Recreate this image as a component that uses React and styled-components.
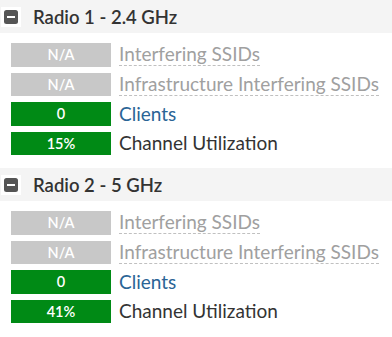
import React from 'react';
import styled, { createGlobalStyle } from 'styled-components';

const GlobalStyle = createGlobalStyle`
  body {
    margin: 0;
    background: #ffffff;
    font-family: Lato, "Liberation Sans", sans-serif;
  }
`;

const Page = styled('div')`
  display: flex;
  flex-direction: column;
  gap: 13px;
  width: 392px;
`;

const Section = styled('section')`
  display: flex;
  flex-direction: column;
`;

const Header = styled('div')`
  display: flex;
  align-items: center;
  gap: 12px;
  height: 33px;
  padding-left: 1px;
  background-color: #f4f4f4;
`;

const ToggleBox = styled('span')`
  display: flex;
  align-items: center;
  justify-content: center;
  width: 20px;
  height: 20px;
  background-color: #ffffff;
`;

const Title = styled('h3')`
  margin: 0;
  font-size: 18.5px;
  font-weight: 600;
  color: #333333;
`;

const Rows = styled('div')`
  display: flex;
  flex-direction: column;
  gap: 6px;
  padding: 10px 0 0 11px;
`;

const Row = styled('div')`
  display: flex;
  align-items: center;
  gap: 8px;
  height: 23.5px;
`;

const Badge = styled('span')`
  display: flex;
  align-items: center;
  justify-content: center;
  width: 100px;
  height: 100%;
  background-color: ${props => (props.active ? '#008a15' : '#c8c8c8')};
  color: #ffffff;
  font-size: 14.5px;
  font-weight: 600;
`;

const Label = styled('span')`
  font-size: 19px;
  line-height: 22px;
  color: ${props =>
    props.kind === 'muted' ? '#a0a0a0' : props.kind === 'link' ? '#2a6496' : '#333333'};
  ${props =>
    props.kind === 'muted' &&
    `
    border-bottom: 1px dashed #c0c0c0;
  `}
`;

const MinusIcon = () => (
  <svg width="14" height="14" viewBox="0 0 14 14">
    <rect x="0" y="0" width="14" height="14" rx="2.5" fill="#555555" />
    <rect x="3" y="6" width="8" height="2" fill="#ffffff" />
  </svg>
);

const radios = [
  { title: 'Radio 1 - 2.4 GHz', util: '15%' },
  { title: 'Radio 2 - 5 GHz', util: '41%' },
];

const App = () => (
  <>
    <GlobalStyle />
    <Page>
      {radios.map(radio => (
        <Section key={radio.title}>
          <Header>
            <ToggleBox>
              <MinusIcon />
            </ToggleBox>
            <Title>{radio.title}</Title>
          </Header>
          <Rows>
            <Row>
              <Badge>N/A</Badge>
              <Label kind="muted">Interfering SSIDs</Label>
            </Row>
            <Row>
              <Badge>N/A</Badge>
              <Label kind="muted">Infrastructure Interfering SSIDs</Label>
            </Row>
            <Row>
              <Badge active>0</Badge>
              <Label kind="link">Clients</Label>
            </Row>
            <Row>
              <Badge active>{radio.util}</Badge>
              <Label>Channel Utilization</Label>
            </Row>
          </Rows>
        </Section>
      ))}
    </Page>
  </>
);

export default App;
